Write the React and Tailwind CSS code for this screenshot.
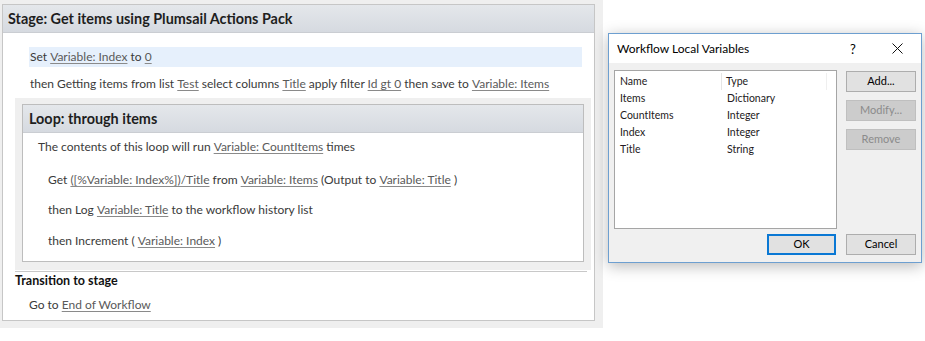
import React from "react";

const L = ({ children }) => (
  <span className="underline decoration-[#8a8a8a] underline-offset-[2px] text-[#5a5a5a]">{children}</span>
);

export default function App() {
  return (
    <div className="w-[925px] h-[341px] bg-white flex items-start overflow-hidden text-[#3a3a3a] font-['Lato','Open_Sans',sans-serif]">
      {/* Left workflow designer */}
      <div className="w-[603px] h-[328px] bg-[#efefef] pt-[4px] pl-[2px] shrink-0">
        <div className="w-[593px] h-[317px] border border-[#c6c6c6] bg-white flex flex-col">
          <div className="h-[28px] shrink-0 bg-gradient-to-b from-[#e4e7eb] to-[#d6dae0] border-b border-[#cacdd2] pl-[5px] pt-[1px] flex items-center font-bold text-[14.4px] text-[#1e1e1e]">
            Stage: Get items using Plumsail Actions Pack
          </div>
          <div className="mt-[14px] ml-[26px] w-[553px] h-[20px] bg-[#e6f0fc] flex items-center pl-[1px] text-[12px]">
            Set&nbsp;<L>Variable: Index</L>&nbsp;to&nbsp;<L>0</L>
          </div>
          <div className="mt-[7px] ml-[27px] h-[20px] flex items-center text-[12px] whitespace-nowrap">
            then Getting items from list&nbsp;<L>Test</L>&nbsp;select columns&nbsp;<L>Title</L>&nbsp;apply filter&nbsp;<L>Id gt 0</L>&nbsp;then save to&nbsp;<L>Variable: Items</L>
          </div>
          {/* Loop */}
          <div className="mt-[4px] ml-[12px] w-[576px] h-[172px] bg-[#efefef] pt-[6px] pl-[7px]">
            <div className="w-[562px] h-[158px] border border-[#bdbdbd] bg-white flex flex-col">
              <div className="h-[28px] shrink-0 bg-gradient-to-b from-[#e4e7eb] to-[#d6dae0] border-b border-[#cacdd2] pl-[6px] flex items-center font-bold text-[14.4px] text-[#1e1e1e]">
                Loop: through items
              </div>
              <div className="mt-[4px] pl-[15px] h-[20px] flex items-center text-[12px] whitespace-nowrap">
                The contents of this loop will run&nbsp;<L>Variable: CountItems</L>&nbsp;times
              </div>
              <div className="mt-[13px] pl-[25px] h-[20px] flex items-center text-[12px] whitespace-nowrap">
                Get&nbsp;<L>([%Variable: Index%])/Title</L>&nbsp;from&nbsp;<L>Variable: Items</L>&nbsp;(Output to&nbsp;<L>Variable: Title</L>&nbsp;)
              </div>
              <div className="mt-[10px] pl-[25px] h-[20px] flex items-center text-[12px] whitespace-nowrap">
                then Log&nbsp;<L>Variable: Title</L>&nbsp;to the workflow history list
              </div>
              <div className="mt-[11px] pl-[25px] h-[20px] flex items-center text-[12px] whitespace-nowrap">
                then Increment (&nbsp;<L>Variable: Index</L>&nbsp;)
              </div>
            </div>
          </div>
          <div className="mt-[1px] ml-[12px] w-[572px] h-[1px] bg-[#c8c8c8]" />
          <div className="h-[16px] mt-[1px] pl-[12px] flex items-center font-bold text-[12.5px] text-[#111]">
            Transition to stage
          </div>
          <div className="mt-[6px] pl-[26px] h-[20px] flex items-center text-[12px]">
            Go to&nbsp;<L>End of Workflow</L>
          </div>
        </div>
      </div>

      {/* Dialog */}
      <div className="ml-[5px] mt-[33px] w-[314px] h-[230px] border border-[#6d9fd0] bg-[#f0f0f0] shadow-[0_3px_14px_rgba(0,0,0,0.28)] flex flex-col text-[11px] text-[#000]">
        <div className="h-[29px] shrink-0 bg-white flex items-center pl-[8px] relative">
          <span className="text-[12px] mt-[1px]">Workflow Local Variables</span>
          <span className="absolute left-[241px] top-[6px] text-[13px]">?</span>
          <svg className="absolute left-[283px] top-[9px]" width="11" height="11" viewBox="0 0 11 11">
            <path d="M0.5 0.5 L10.5 10.5 M10.5 0.5 L0.5 10.5" stroke="#111" strokeWidth="1" fill="none" />
          </svg>
        </div>
        <div className="flex-1 flex flex-col px-[5px] pt-[7px]">
          <div className="flex gap-[9px]">
            <div className="w-[224px] h-[159px] bg-white border border-[#a5a5a5] flex flex-col text-[10.5px] text-[#241a22]">
              <div className="h-[19px] pt-[2px] flex items-center">
                <div className="w-[107px] h-full flex items-center pl-[5px] border-r border-[#e5e5e5]">Name</div>
                <div className="w-[105px] h-full flex items-center pl-[4px] border-r border-[#efefef]">Type</div>
              </div>
              <div className="pt-[1px]">
                {[
                  ["Items", "Dictionary"],
                  ["CountItems", "Integer"],
                  ["Index", "Integer"],
                  ["Title", "String"],
                ].map(([n, t]) => (
                  <div key={n} className="h-[16.7px] flex items-center">
                    <div className="w-[108px] pl-[5px]">{n}</div>
                    <div className="pl-[4px]">{t}</div>
                  </div>
                ))}
              </div>
            </div>
            <div className="flex flex-col gap-[8px] pt-[1px]">
              <div className="w-[70px] h-[21px] bg-[#e1e1e1] border border-[#adadad] flex items-center justify-center">Add...</div>
              <div className="w-[70px] h-[21px] bg-[#cccccc] border border-[#bfbfbf] text-[#8b8b8b] flex items-center justify-center">Modify...</div>
              <div className="w-[70px] h-[21px] bg-[#cccccc] border border-[#bfbfbf] text-[#8b8b8b] flex items-center justify-center">Remove</div>
            </div>
          </div>
          <div className="mt-[5px] flex justify-end gap-[10px]">
            <div className="w-[69px] h-[21px] bg-[#e1e1e1] border-2 border-[#0a78d4] flex items-center justify-center">OK</div>
            <div className="w-[70px] h-[21px] bg-[#e1e1e1] border border-[#adadad] flex items-center justify-center">Cancel</div>
          </div>
        </div>
      </div>
    </div>
  );
}
